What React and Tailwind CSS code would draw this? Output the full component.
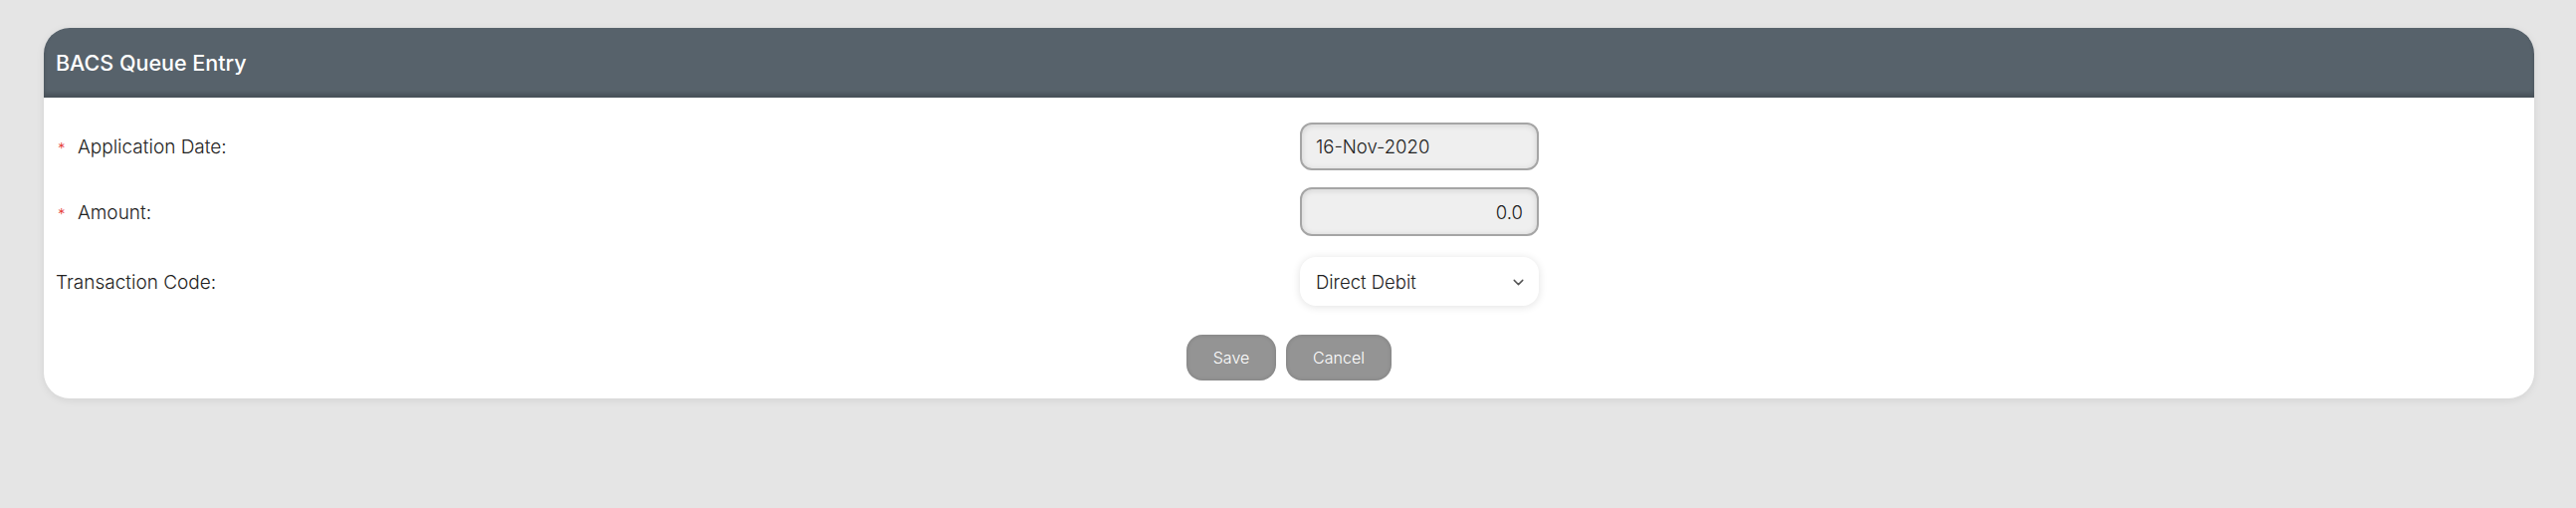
import { ChevronDown } from 'lucide-react'

const font = { fontFamily: 'Inter, "Noto Sans", sans-serif' }

function Row({ label, required, children, className = '' }) {
  return (
    <div className={`flex items-center ${className}`}>
      <div className="w-[1250px] pt-[3px] flex items-center text-[19px] font-light text-[#222]">
        {required && <span className="w-[22px] pl-[2px] text-[15px] text-[#e53935] leading-none">*</span>}
        <span>{label}</span>
      </div>
      {children}
    </div>
  )
}

export default function App() {
  return (
    <div className="min-h-[510px] bg-[#e5e5e5] pt-[28px] pb-[40px]" style={font}>
      <div className="ml-[44px] mr-[42px] rounded-[26px] bg-white shadow-[0_2px_8px_rgba(0,0,0,0.08)]">
        <div className="h-[70px] rounded-t-[26px] bg-[#57626b] px-3 flex items-center shadow-[inset_0_-4px_4px_rgba(0,0,0,0.18)]">
          <h2 className="text-[21.5px] font-medium text-white">BACS Queue Entry</h2>
        </div>

        <div className="px-3 pt-[25px] pb-[18px]">
          <Row label="Application Date:" required>
            <input
              defaultValue="16-Nov-2020"
              className="w-[240px] h-[48px] rounded-[12px] border-2 border-[#a5a5a5] bg-[#efefef] px-[14px] text-[18.5px] font-light text-[#222] shadow-[inset_0_1px_6px_rgba(0,0,0,0.12)] outline-none"
            />
          </Row>
          <Row label="Amount:" required className="mt-[17px]">
            <input
              defaultValue="0.0"
              className="w-[240px] h-[49px] rounded-[12px] border-2 border-[#a5a5a5] bg-[#efefef] px-[14px] text-right text-[18.5px] font-light text-[#222] shadow-[inset_0_1px_6px_rgba(0,0,0,0.12)] outline-none"
            />
          </Row>
          <Row label="Transaction Code:" className="mt-[21px]">
            <div className="w-[240px] h-[49px] rounded-[16px] bg-white pl-4 pr-[12px] pt-[2px] flex items-center justify-between text-[18.5px] font-light text-[#222] shadow-[0_1px_8px_rgba(0,0,0,0.12)]">
              <span>Direct Debit</span>
              <ChevronDown size={17} strokeWidth={2} className="text-[#555]" />
            </div>
          </Row>

          <div className="mt-[29px] flex justify-center gap-[10px]">
            <button className="w-[90px] h-[46px] rounded-[16px] bg-[#949494] text-[16px] font-light text-white shadow-[inset_0_0_4px_rgba(0,0,0,0.15)]">
              Save
            </button>
            <button className="w-[106px] h-[46px] rounded-[16px] bg-[#949494] text-[16px] font-light text-white shadow-[inset_0_0_4px_rgba(0,0,0,0.15)]">
              Cancel
            </button>
          </div>
        </div>
      </div>
    </div>
  )
}
